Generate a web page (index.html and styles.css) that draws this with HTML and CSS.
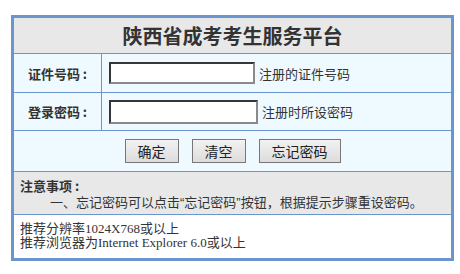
FILE: index.html
```html
<!DOCTYPE html>
<html lang="zh-CN">
<head>
    <meta charset="UTF-8">
    <title>陕西省成考考生服务平台</title>
    <link rel="stylesheet" href="styles.css">
</head>
<body>
    <div class="panel">
        <div class="title">陕西省成考考生服务平台</div>
        <div class="row">
            <div class="label">证件号码 :</div>
            <div class="field">
                <input type="text" class="box">
                <span class="hint">注册的证件号码</span>
            </div>
        </div>
        <div class="row row-pwd">
            <div class="label">登录密码 :</div>
            <div class="field">
                <input type="password" class="box box-pwd">
                <span class="hint">注册时所设密码</span>
            </div>
        </div>
        <div class="actions">
            <button class="btn">确定</button>
            <button class="btn">清空</button>
            <button class="btn">忘记密码</button>
        </div>
        <div class="notes">
            <div class="notes-head">注意事项 :</div>
            <div class="notes-text">一、忘记密码可以点击“忘记密码”按钮，根据提示步骤重设密码。</div>
        </div>
        <div class="footer">
            <div>推荐分辨率1024X768或以上</div>
            <div>推荐浏览器为Internet Explorer 6.0或以上</div>
        </div>
    </div>
</body>
</html>
```

FILE: styles.css
```css
body {
    margin: 0;
    font-family: "Noto Sans CJK SC", sans-serif;
    color: #333;
    background: #fff;
}
.panel {
    margin: 15px 0 0 11px;
    width: 437px;
    border: 3px solid #6b96cd;
}
.title {
    height: 35px;
    line-height: 35px;
    background: #e8e8e8;
    text-align: center;
    font-size: 20px;
    font-weight: bold;
    color: #333;
}
.row {
    display: grid;
    grid-template-columns: 88px 1fr;
    height: 38px;
    background: #eefaff;
    border-top: 1px solid #6b96cd;
}
.row-pwd {
    height: 37px;
}
.label {
    display: flex;
    align-items: center;
    justify-content: center;
    border-right: 1px solid #6b96cd;
    font-size: 13px;
    font-weight: bold;
    white-space: pre;
}
.field {
    display: flex;
    align-items: center;
    gap: 4px;
    padding-left: 7px;
}
.box {
    box-sizing: border-box;
    width: 146px;
    height: 22px;
    margin: 0;
    border: 2px inset #8a8a8a;
    background: #fff;
}
.box-pwd {
    width: 149px;
    height: 24px;
}
.hint {
    font-size: 13px;
    color: #333;
}
.actions {
    display: flex;
    justify-content: center;
    align-items: center;
    gap: 13px;
    height: 40px;
    background: #eefaff;
    border-top: 1px solid #6b96cd;
}
.btn {
    height: 24px;
    padding: 0 12px;
    font-family: "Noto Sans CJK SC", sans-serif;
    font-size: 14px;
    color: #222;
    background: linear-gradient(#f2f2f2, #dcdcdc);
    border: 1px solid #777;
    cursor: pointer;
}
.notes {
    height: 43px;
    background: #e8e8e8;
    border-top: 1px solid #6b96cd;
    padding: 5px 0 0 6px;
    box-sizing: border-box;
    font-size: 13px;
    line-height: 17px;
}
.notes-head {
    font-weight: bold;
    white-space: pre;
}
.notes-text {
    padding-left: 30px;
    font-family: "Liberation Sans", "Noto Sans CJK SC", sans-serif;
}
.footer {
    height: 44px;
    box-sizing: border-box;
    padding: 7px 0 0 6px;
    border-top: 1px solid #6b96cd;
    font-family: "Liberation Serif", "Noto Sans CJK SC", serif;
    font-size: 13px;
    line-height: 13.5px;
}
```
